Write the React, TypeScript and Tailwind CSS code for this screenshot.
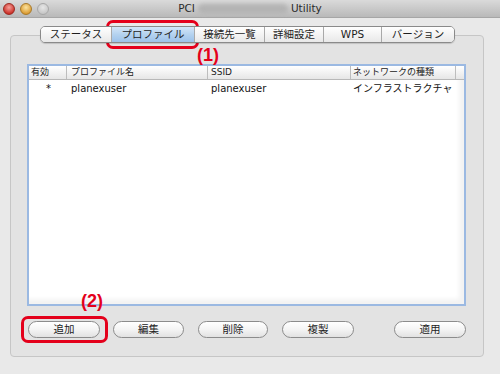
import React from "react";

const UI = '"DejaVu Sans", "Noto Sans CJK JP", sans-serif';

function Light({ from, to, border }: { from: string; to: string; border: string }) {
  return (
    <div
      className="w-[12px] h-[12px] rounded-full"
      style={{
        background: `radial-gradient(circle at 50% 35%, ${from} 0%, ${to} 80%)`,
        border: `1px solid ${border}`,
      }}
    />
  );
}

const tabs: { label: string; w: string; active?: boolean }[] = [
  { label: "ステータス", w: "w-[70px]" },
  { label: "プロファイル", w: "w-[83px]", active: true },
  { label: "接続先一覧", w: "w-[70px]" },
  { label: "詳細設定", w: "w-[59px]" },
  { label: "WPS", w: "w-[58px]" },
  { label: "バージョン", w: "w-[73px]" },
];

function Btn({ label, className }: { label: string; className: string }) {
  return (
    <div
      className={`h-[17px] rounded-full border border-[#8c8c8c] bg-gradient-to-b from-[#ffffff] via-[#f4f4f4] to-[#e2e2e2] flex items-center justify-center text-[10.5px] text-[#222] ${className}`}
    >
      {label}
    </div>
  );
}

export default function App() {
  return (
    <div
      className="w-[500px] h-[374px] overflow-hidden bg-[#e9e9e9] relative"
      style={{ fontFamily: UI }}
    >
      {/* title bar */}
      <div className="h-[18px] grid grid-cols-[60px_1fr_60px] items-center bg-gradient-to-b from-[#dadada] to-[#b9b9b9] border-b border-[#a6a6a6]">
        <div className="flex items-center gap-[5px] pl-[3px]">
          <Light from="#f6a09a" to="#c8261e" border="#9a2a22" />
          <Light from="#fbe3a0" to="#d9962a" border="#a87a2a" />
          <Light from="#e6e6e6" to="#c4c4c4" border="#a8a8a8" />
        </div>
        <div className="flex items-center justify-center text-[10.5px] text-[#2a2a2a] gap-[3px]">
          <span>PCI</span>
          <span className="w-[90px] h-[10px] rounded-[5px] bg-[#b3b3b3] blur-[2px]" />
          <span>Utility</span>
        </div>
        <div />
      </div>

      {/* tabs */}
      <div className="relative z-10 mt-[8px] -mb-[8px] ml-[40px] flex h-[17px] w-fit rounded-[5px] border border-[#8a8a8a] overflow-hidden shadow-[0_1px_1px_rgba(0,0,0,0.15)]">
        {tabs.map((t, i) => (
          <div
            key={t.label}
            className={`${t.w} h-full flex items-center justify-center text-[10.5px] text-[#1e1e1e] ${
              i > 0 ? "border-l border-[#a9a9a9]" : ""
            } ${
              t.active
                ? "bg-gradient-to-b from-[#d4e6f8] via-[#b4d2ef] to-[#9cc2ea]"
                : "bg-gradient-to-b from-[#ffffff] to-[#e8e8e8]"
            }`}
          >
            {t.label}
          </div>
        ))}
      </div>

      {/* panel */}
      <div className="ml-[10px] w-[474px] h-[322px] rounded-[4px] border border-[#c6c6c6] bg-[#e3e3e3] pt-[28px] pl-[16px] flex flex-col">
        {/* table */}
        <div className="w-[439px] h-[242px] border-2 border-[#9bb9e2] bg-white flex flex-col shadow-[inset_-5px_-5px_4px_rgba(0,0,0,0.05)]">
          <div className="h-[14px] flex text-[9px] text-[#222] bg-gradient-to-b from-[#ffffff] to-[#e6e6e6] border-b border-[#b8b8b8] leading-[13px]">
            <div className="w-[38px] pl-[2px] border-r border-[#bdbdbd]">有効</div>
            <div className="w-[141px] pl-[4px] border-r border-[#bdbdbd]">プロファイル名</div>
            <div className="w-[143px] pl-[3px] border-r border-[#bdbdbd]">SSID</div>
            <div className="w-[105px] pl-[2px] border-r border-[#bdbdbd]">ネットワークの種類</div>
            <div className="flex-1" />
          </div>
          <div className="h-[17px] flex items-center text-[10px] text-[#111]">
            <div className="w-[38px] pl-[17px]">*</div>
            <div className="w-[141px] pl-[4px]">planexuser</div>
            <div className="w-[143px] pl-[3px]">planexuser</div>
            <div className="pl-[2px] whitespace-nowrap">インフラストラクチャ</div>
          </div>
        </div>

        {/* buttons */}
        <div className="mt-[15px] flex">
          <Btn label="追加" className="w-[72px] ml-[1px]" />
          <Btn label="編集" className="w-[71px] ml-[13px]" />
          <Btn label="削除" className="w-[70px] ml-[14px]" />
          <Btn label="複製" className="w-[72px] ml-[14px]" />
          <Btn label="適用" className="w-[72px] ml-[40px]" />
        </div>
      </div>

      {/* annotations */}
      <div className="absolute left-[106px] top-[20px] w-[93px] h-[29px] rounded-[7px] border-[3px] border-[#e4001b]" />
      <div
        className="absolute left-[197px] top-[46px] text-[18px] font-bold text-[#e4001b] leading-none"
        style={{ fontFamily: '"Liberation Sans", Arial, sans-serif' }}
      >
        (1)
      </div>
      <div className="absolute left-[21px] top-[316px] w-[87px] h-[27px] rounded-[7px] border-[3px] border-[#e4001b]" />
      <div
        className="absolute left-[81px] top-[292px] text-[18px] font-bold text-[#e4001b] leading-none"
        style={{ fontFamily: '"Liberation Sans", Arial, sans-serif' }}
      >
        (2)
      </div>
    </div>
  );
}
